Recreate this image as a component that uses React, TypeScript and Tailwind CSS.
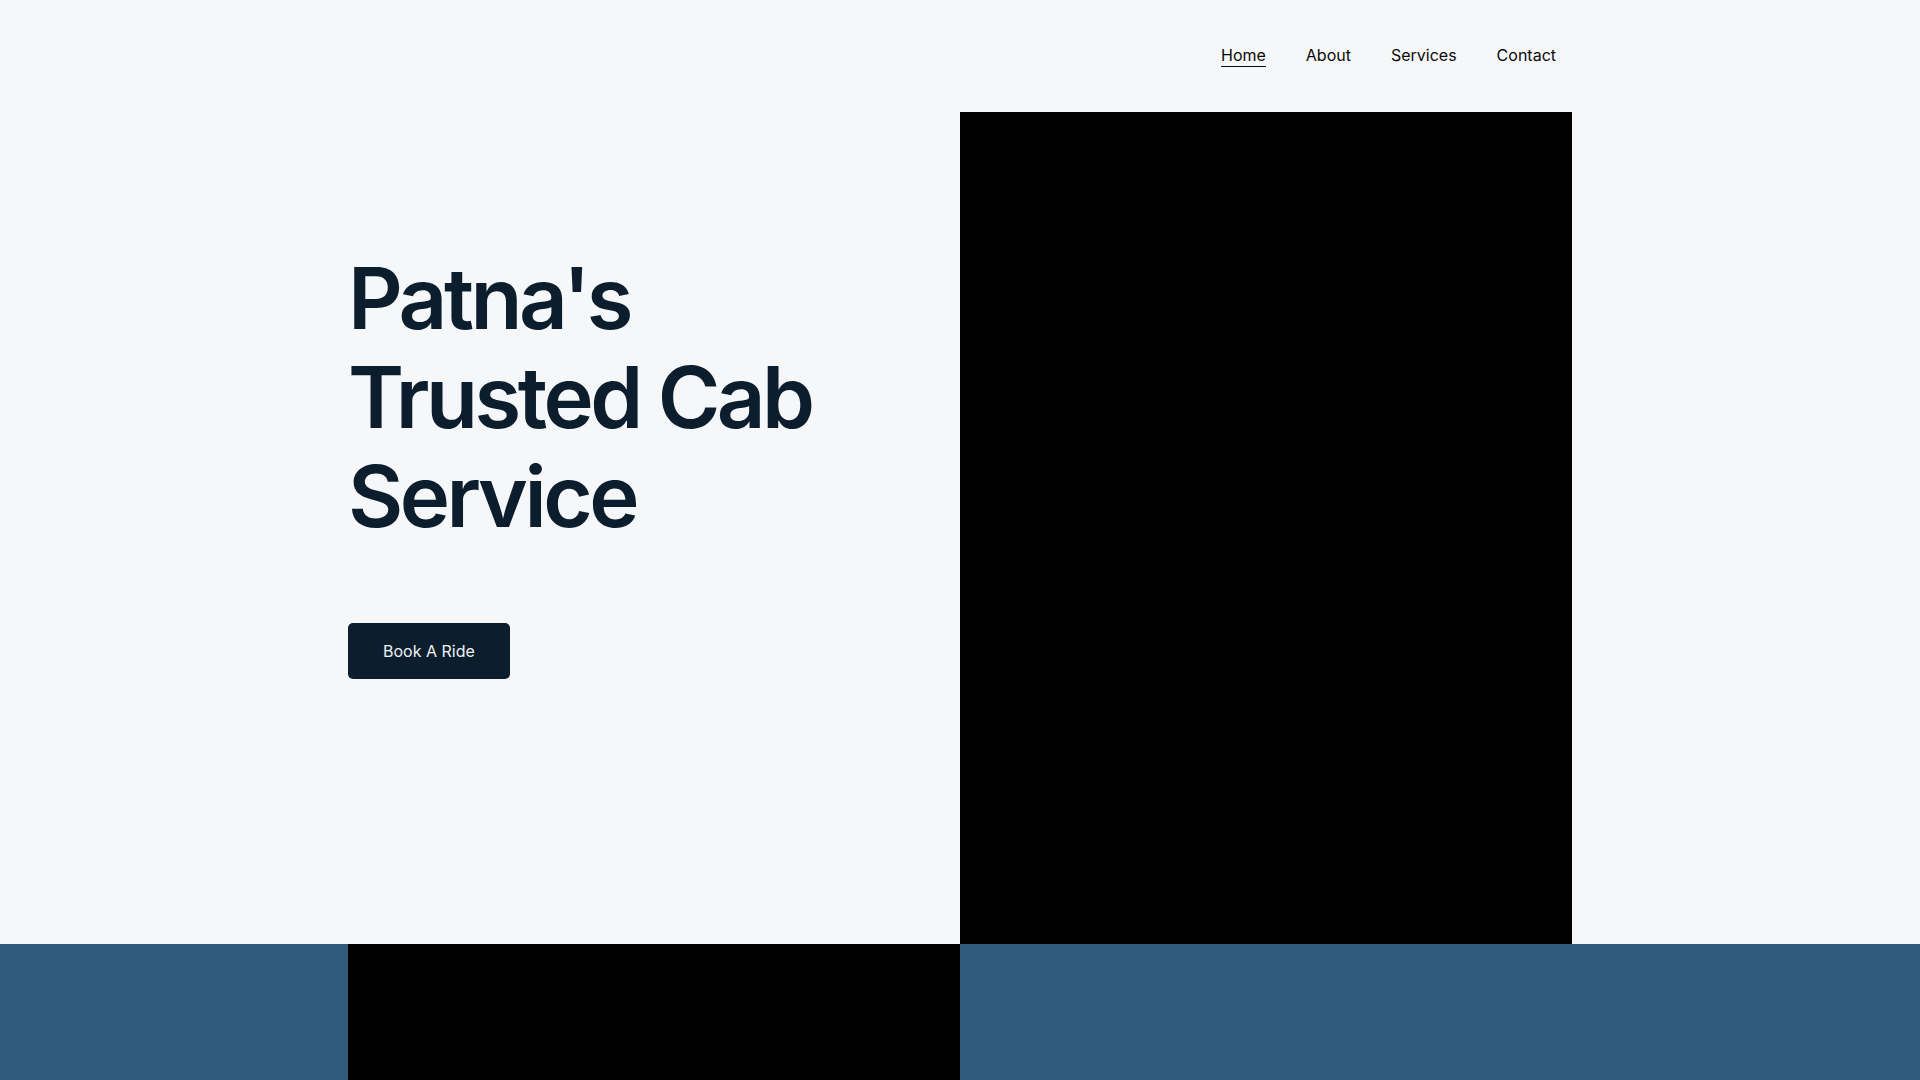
import React from "react";

export default function App() {
  return (
    <div className="min-h-screen bg-[#f6f7f9] text-[#0c1e2d]" style={{ fontFamily: "Inter, 'Noto Sans', sans-serif" }}>
      <header className="mx-auto flex h-[112px] w-[1224px] items-center justify-end pb-[2px]">
        <nav className="pr-4">
          <ul className="flex gap-10 text-[16px] leading-6 text-[#0a0a0a]">
            <li><a className="border-b border-[#0a0a0a] pb-[1px]" href="#">Home</a></li>
            <li><a href="#">About</a></li>
            <li><a href="#">Services</a></li>
            <li><a href="#">Contact</a></li>
          </ul>
        </nav>
      </header>
      <section className="mx-auto flex h-[832px] w-[1224px]">
        <div className="flex w-[612px] flex-col items-start pt-[137px]">
          <h1 className="text-[85px] font-semibold leading-[99px] tracking-[-3.5px] text-[#0c1e2d]">
            Patna's
            <br />
            Trusted Cab
            <br />
            Service
          </h1>
          <button className="mt-[77px] rounded-[5px] bg-[#0c1e2d] px-[35px] py-4 text-[16px] leading-6 text-[#eef0f3]">
            Book A Ride
          </button>
        </div>
        <div className="h-full w-[612px] bg-black" />
      </section>
      <section className="bg-[#2f5a7c]">
        <div className="mx-auto flex h-[600px] w-[1224px]">
          <div className="h-full w-[612px] bg-black" />
        </div>
      </section>
    </div>
  );
}
